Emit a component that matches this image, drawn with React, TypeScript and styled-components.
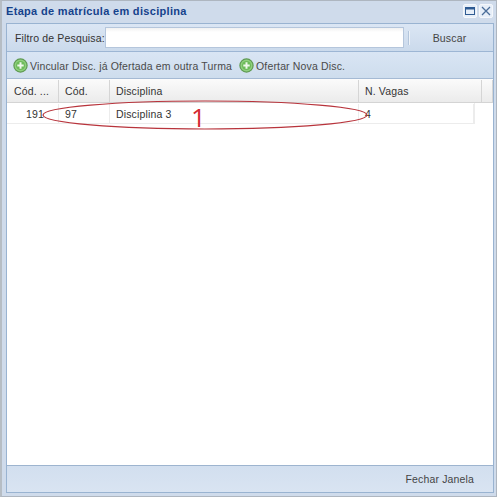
import styled, { createGlobalStyle } from "styled-components";

const GlobalStyle = createGlobalStyle`
  html, body {
    margin: 0;
    padding: 0;
    background: #c3cad3;
  }
`;

const Win = styled.div`
  position: relative;
  box-sizing: border-box;
  width: 497px;
  height: 497px;
  display: flex;
  flex-direction: column;
  padding: 0 2px 3px 4px;
  background: #cfdbeb;
  border: 1px solid #aeb6c0;
  border-left-width: 2px;
  border-left-color: #b6bdc4;
  font-family: "Liberation Sans", Arial, sans-serif;
  font-size: 10.5px;
  letter-spacing: 0.15px;
  color: #444;
`;

const TitleBar = styled.div`
  height: 22px;
  display: flex;
  align-items: center;
  justify-content: space-between;
  padding: 0 1px 2px 0;
  box-sizing: border-box;
  flex: none;
`;

const Title = styled.div`
  font-weight: bold;
  font-size: 11px;
  letter-spacing: 0.32px;
  color: #15428b;
`;

const TitleTools = styled.div`
  display: flex;
  gap: 2px;
`;

const ToolBtn = styled.div`
  width: 14px;
  height: 14px;
  box-sizing: border-box;
  display: flex;
  align-items: center;
  justify-content: center;
  background: #e6eef8;
  border: 1px solid #f4f7fb;
  border-radius: 2px;
`;

const Panel = styled.div`
  flex: 1;
  display: flex;
  flex-direction: column;
  border: 1px solid #99b3d1;
  min-height: 0;
`;

const SearchBar = styled.div`
  height: 28px;
  flex: none;
  box-sizing: border-box;
  display: flex;
  align-items: center;
  padding-left: 8px;
  background: linear-gradient(#dbe6f4, #cbdaec);
  border-bottom: 1px solid #9db6d4;
`;

const SearchLabel = styled.span`
  width: 90px;
  flex: none;
  color: #333;
`;

const SearchInput = styled.div`
  width: 299px;
  height: 21px;
  box-sizing: border-box;
  background: linear-gradient(#f1f1f1, #fff 4px);
  border: 1px solid #b5c6dc;
`;

const Sep = styled.div`
  width: 1px;
  height: 14px;
  margin-left: 4px;
  background: #b4c6dc;
  border-right: 1px solid #eef3f9;
`;

const SearchBtn = styled.div`
  flex: 1;
  text-align: center;
  padding-right: 4px;
  color: #444;
`;

const ActionBar = styled.div`
  height: 27px;
  flex: none;
  box-sizing: border-box;
  display: flex;
  align-items: center;
  gap: 7px;
  padding: 1px 0 0 6px;
  background: linear-gradient(#d9e5f4, #cedded);
  border-bottom: 1px solid #a5bad4;
`;

const Action = styled.div`
  display: flex;
  align-items: center;
  gap: 2px;
  color: #4a4a4a;
`;

const Body = styled.div`
  flex: 1;
  background: #fff;
  display: flex;
  flex-direction: column;
  min-height: 0;
`;

const HeaderRow = styled.div`
  height: 24px;
  flex: none;
  box-sizing: border-box;
  display: flex;
  padding-top: 1px;
  background: linear-gradient(#fbfbfb, #ebebeb);
  border-bottom: 1px solid #d4d4d4;
`;

const HeadCell = styled.div<{ $w?: number; $pad?: number }>`
  ${(p) => (p.$w ? `width: ${p.$w}px;` : "flex: 1;")}
  flex-shrink: 0;
  box-sizing: border-box;
  display: flex;
  align-items: center;
  padding-left: ${(p) => p.$pad ?? 6}px;
  color: #333;
  border-right: 1px solid #d5d5d5;
`;

const DataRow = styled.div`
  height: 21px;
  width: 468px;
  flex: none;
  box-sizing: border-box;
  display: flex;
  padding-top: 1px;
  border-bottom: 1px solid #ececec;
  border-right: 1px solid #ececec;
`;

const Cell = styled.div<{ $w?: number; $right?: boolean }>`
  ${(p) => (p.$w ? `width: ${p.$w}px;` : "flex: 1;")}
  flex-shrink: 0;
  box-sizing: border-box;
  display: flex;
  align-items: center;
  padding-left: 6px;
  color: #333;
  border-right: 1px solid #ececec;
  ${(p) => (p.$right ? "justify-content: flex-end; padding-right: 14px;" : "")}
`;

const Footer = styled.div`
  height: 27px;
  flex: none;
  box-sizing: border-box;
  display: flex;
  align-items: center;
  justify-content: flex-end;
  padding: 0 19px 0 0;
  background: linear-gradient(#d2dfef, #d9e4f2);
  border-top: 1px solid #9db4cf;
  color: #444;
`;

const Ellipse = styled.svg`
  position: absolute;
  left: -2px;
  top: -1px;
  pointer-events: none;
`;

const Mark = styled.span`
  position: absolute;
  left: 189px;
  top: 101px;
  font-family: "Open Sans", "Liberation Sans", sans-serif;
  font-size: 26px;
  line-height: 30px;
  letter-spacing: 0;
  color: #d42a30;
`;

const PlusIcon = () => (
  <svg width="15" height="15" viewBox="0 0 15 15">
    <circle cx="7.5" cy="7.5" r="6.6" fill="#8fd07e" stroke="#5f9a52" strokeWidth="1.2" />
    <circle cx="7.5" cy="7.5" r="4.6" fill="#6dbb5a" />
    <path d="M7.5 4.3v6.4M4.3 7.5h6.4" stroke="#eef8ea" strokeWidth="2" />
  </svg>
);

const App = () => {
  return (
    <>
      <GlobalStyle />
      <Win>
        <TitleBar>
          <Title>Etapa de matrícula em disciplina</Title>
          <TitleTools>
            <ToolBtn>
              <svg width="10" height="8" viewBox="0 0 10 8">
                <rect x="0.5" y="0.5" width="9" height="7" fill="none" stroke="#2f5b92" />
                <path d="M0 1.5h10" stroke="#2f5b92" strokeWidth="2" />
              </svg>
            </ToolBtn>
            <ToolBtn>
              <svg width="10" height="10" viewBox="0 0 10 10">
                <path d="M1 1l8 8M9 1l-8 8" stroke="#4a6d99" strokeWidth="1.3" />
              </svg>
            </ToolBtn>
          </TitleTools>
        </TitleBar>
        <Panel>
          <SearchBar>
            <SearchLabel>Filtro de Pesquisa:</SearchLabel>
            <SearchInput />
            <Sep />
            <SearchBtn>Buscar</SearchBtn>
          </SearchBar>
          <ActionBar>
            <Action>
              <PlusIcon />
              Vincular Disc. já Ofertada em outra Turma
            </Action>
            <Action>
              <PlusIcon />
              Ofertar Nova Disc.
            </Action>
          </ActionBar>
          <Body>
            <HeaderRow>
              <HeadCell $w={52} $pad={7}>Cód. ...</HeadCell>
              <HeadCell $w={51}>Cód.</HeadCell>
              <HeadCell $w={249}>Disciplina</HeadCell>
              <HeadCell $w={123}>N. Vagas</HeadCell>
              <HeadCell />
            </HeaderRow>
            <DataRow>
              <Cell $w={52} $right>191</Cell>
              <Cell $w={51}>97</Cell>
              <Cell $w={249}>Disciplina 3</Cell>
              <Cell>4</Cell>
            </DataRow>
          </Body>
          <Footer>Fechar Janela</Footer>
        </Panel>
        <Ellipse width="497" height="497" viewBox="0 0 497 497">
          <ellipse cx="205" cy="115" rx="162" ry="14" fill="none" stroke="#b8343c" strokeWidth="1.2" />
        </Ellipse>
        <Mark>1</Mark>
      </Win>
    </>
  );
};

export default App;
